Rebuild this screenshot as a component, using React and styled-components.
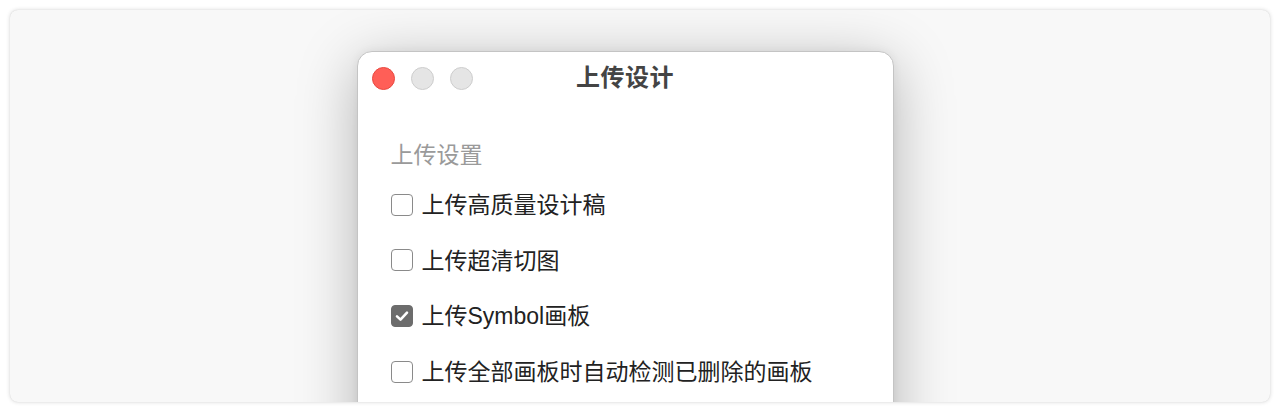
import styled, { createGlobalStyle } from "styled-components"

const GlobalStyle = createGlobalStyle`
  html, body {
    margin: 0;
    padding: 0;
    background: #ffffff;
  }
  body {
    font-family: "Liberation Sans", "Noto Sans CJK SC", sans-serif;
  }
`

const Page = styled.div`
  padding: 10px;
  height: 412px;
  box-sizing: border-box;
`

const Card = styled.div`
  height: 392px;
  background: #f8f8f8;
  border-radius: 8px;
  box-shadow: 0 0 4px rgba(0, 0, 0, 0.16), 0 0 1px rgba(0, 0, 0, 0.12);
  overflow: hidden;
  padding-top: 41px;
  padding-left: 346.5px;
  box-sizing: border-box;
`

const Dialog = styled.div`
  width: 537px;
  height: 420px;
  box-sizing: border-box;
  background: #fff;
  border: 1px solid #c4c4c4;
  border-radius: 15px;
  box-shadow: 0 12px 60px rgba(0, 0, 0, 0.28), 0 0 10px rgba(0, 0, 0, 0.06);
`

const TitleBar = styled.div`
  height: 53px;
  display: grid;
  grid-template-columns: 1fr auto 1fr;
  align-items: center;
  padding: 0 14px;
`

const Lights = styled.div`
  display: flex;
  gap: 16px;
`

const Light = styled.span`
  width: 23px;
  height: 23px;
  border-radius: 50%;
  box-sizing: border-box;
  background: ${p => (p.$red ? "#ff5f57" : "#e5e5e5")};
  border: 1px solid ${p => (p.$red ? "#e9483f" : "#cdcdcd")};
`

const Title = styled.h1`
  margin: -6px 0 0;
  font-size: 24px;
  font-weight: 700;
  color: #444;
  letter-spacing: 0.5px;
`

const Body = styled.div`
  padding: 35px 33px 0;
`

const SectionLabel = styled.div`
  font-size: 23px;
  line-height: 30px;
  color: #9a9a9a;
  margin-bottom: 7px;
`

const Row = styled.label`
  height: 55.6px;
  display: flex;
  align-items: center;
  gap: 9px;
  font-size: 23px;
  color: #222;
`

const RowText = styled.span`
  margin-top: -3px;
`

const Box = styled.span`
  width: 22px;
  height: 22px;
  box-sizing: border-box;
  border-radius: 4px;
  border: 1.5px solid ${p => (p.$checked ? "#6c6c6c" : "#8a8a8a")};
  background: ${p => (p.$checked ? "#6c6c6c" : "#fff")};
  display: flex;
  align-items: center;
  justify-content: center;
  flex-shrink: 0;
`

const options = [
  { label: "上传高质量设计稿", checked: false },
  { label: "上传超清切图", checked: false },
  { label: "上传Symbol画板", checked: true },
  { label: "上传全部画板时自动检测已删除的画板", checked: false },
]

const App = () => {
  return (
    <Page>
      <GlobalStyle />
      <Card>
        <Dialog>
          <TitleBar>
            <Lights>
              <Light $red />
              <Light />
              <Light />
            </Lights>
            <Title>上传设计</Title>
            <span />
          </TitleBar>
          <Body>
            <SectionLabel>上传设置</SectionLabel>
            {options.map(opt => (
              <Row key={opt.label}>
                <Box $checked={opt.checked}>
                  {opt.checked && (
                    <svg width="14" height="12" viewBox="0 0 14 12">
                      <path d="M2 6.4 L5.5 9.6 L12 2.6" fill="none" stroke="#fff" strokeWidth="2.6" strokeLinecap="round" strokeLinejoin="round" />
                    </svg>
                  )}
                </Box>
                <RowText>{opt.label}</RowText>
              </Row>
            ))}
          </Body>
        </Dialog>
      </Card>
    </Page>
  )
}

export default App
